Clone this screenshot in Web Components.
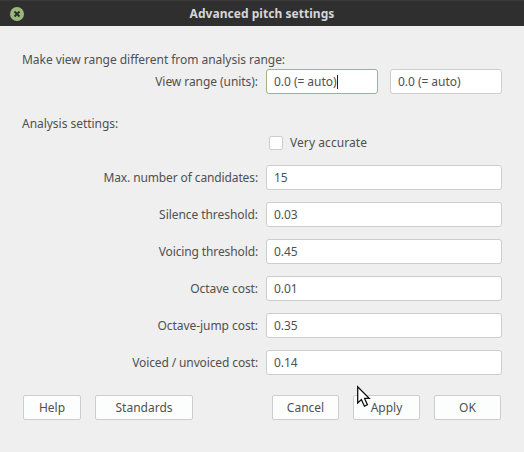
<!DOCTYPE html>
<html lang="en">
<head>
<meta charset="utf-8">
<title>Advanced pitch settings</title>
<style>
html,body{margin:0;padding:0;background:#efefef}
body{width:524px;height:452px;overflow:hidden;font:12px/17px "Noto Sans",sans-serif;color:#505050}
</style>
</head>
<body>
<pitch-dialog></pitch-dialog>
<script>
const define = (name, html) => {
  const tpl = document.createElement('template');
  tpl.innerHTML = html;
  customElements.define(name, class extends HTMLElement {
    constructor() {
      super();
      this.attachShadow({mode: 'open'}).append(tpl.content.cloneNode(true));
    }
  });
};

define('title-bar', `
<style>
:host{display:grid;grid-template-columns:34px 1fr 34px;align-items:center;height:26px;box-sizing:border-box;background:#2f2f2f;border-top:1px solid #3a3a3a;color:#d6d6d6;font-weight:700;text-align:center;letter-spacing:.04px}
svg{display:block;margin-left:10px}
</style>
<svg width="14" height="14" viewBox="0 0 14 14"><circle cx="7" cy="7" r="7" fill="#9ab87c"/><path d="M4.5 4.5l5 5M9.5 4.5l-5 5" stroke="#2f2f2f" stroke-width="2"/></svg>
<span><slot></slot></span>`);

define('text-field', `
<style>
:host{display:flex;align-items:center;box-sizing:border-box;height:25px;padding:0 7px;background:#fff;border:1px solid #cdcdcd;border-radius:3px;min-width:0;letter-spacing:-.04px}
:host([focused]){border-color:#9ab87c}
i{display:none;width:1px;height:14px;background:#202020}
:host([focused]) i{display:block}
</style><span><slot></slot></span><i></i>`);

define('form-row', `
<style>
:host{display:grid;grid-template-columns:236px 236px;column-gap:8px;align-items:center;height:25px}
.label{text-align:right;white-space:nowrap}
.fields{display:grid;grid-auto-flow:column;grid-auto-columns:1fr;column-gap:12px}
</style><span class="label"><slot name="label"></slot></span><div class="fields"><slot></slot></div>`);

define('check-box', `
<style>
:host{display:flex;align-items:center;gap:7px;height:17px;letter-spacing:.07px}
i{box-sizing:border-box;width:14px;height:14px;background:#fff;border:1px solid #cdcdcd;border-radius:2px}
</style><i></i><span><slot></slot></span>`);

define('push-button', `
<style>
:host{display:flex;align-items:center;justify-content:center;box-sizing:border-box;height:25px;background:#fcfefe;border:1px solid #cdcdcd;border-radius:2px}
</style><span><slot></slot></span>`);

define('mouse-pointer', `
<style>:host{display:block;position:absolute;left:356px;top:384px}svg{display:block}</style>
<svg width="16" height="26" viewBox="0 0 16 26"><path d="M1.7 2.8V19L5.4 15.6L8.4 22.2L11.4 20.8L8.6 14.4H13.2Z" fill="#fff" stroke="#111" stroke-width="1.3" stroke-linejoin="miter"/></svg>`);

define('pitch-dialog', `
<style>
:host{display:flex;flex-direction:column;position:relative;width:524px;height:452px;background:#efefef}
main{display:flex;flex-direction:column;padding:25px 22px 0}
h2{margin:0;font:inherit;height:17px;letter-spacing:-.035px}
.range{margin-top:1px}
.analysis{margin-top:21px}
check-box{margin:2px 0 0 247px}
.list{display:grid;row-gap:12px;margin-top:14px}
.snug{letter-spacing:-.06px}
.tight{letter-spacing:-.12px}
footer{display:grid;grid-template-columns:58px 98px 1fr 67px 67px 67px;column-gap:14px;margin:20px 1px 0}
.cancel{grid-column:4}
</style>
<title-bar>Advanced pitch settings</title-bar>
<main>
<h2>Make view range different from analysis range:</h2>
<form-row class="range"><span slot="label" class="snug">View range (units):</span><text-field focused>0.0 (= auto)</text-field><text-field>0.0 (= auto)</text-field></form-row>
<h2 class="analysis">Analysis settings:</h2>
<check-box>Very accurate</check-box>
<div class="list">
<form-row><span slot="label" class="tight">Max. number of candidates:</span><text-field>15</text-field></form-row>
<form-row><span slot="label" class="snug">Silence threshold:</span><text-field>0.03</text-field></form-row>
<form-row><span slot="label" class="tight">Voicing threshold:</span><text-field>0.45</text-field></form-row>
<form-row><span slot="label" class="snug">Octave cost:</span><text-field>0.01</text-field></form-row>
<form-row><span slot="label" class="snug">Octave-jump cost:</span><text-field>0.35</text-field></form-row>
<form-row><span slot="label" class="tight">Voiced / unvoiced cost:</span><text-field>0.14</text-field></form-row>
</div>
<footer><push-button>Help</push-button><push-button>Standards</push-button><push-button class="cancel">Cancel</push-button><push-button>Apply</push-button><push-button>OK</push-button></footer>
</main>
<mouse-pointer></mouse-pointer>`);
</script>
</body>
</html>
